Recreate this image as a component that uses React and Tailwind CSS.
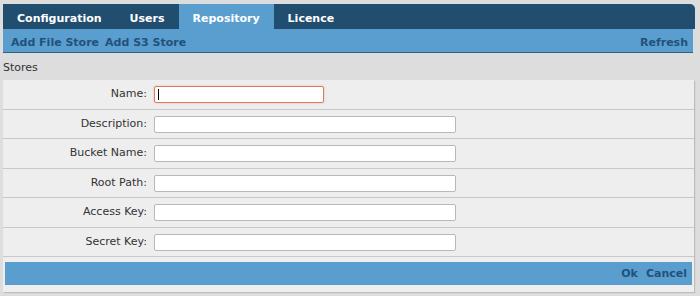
export default function App() {
  const fields = [
    ["Name", "h-[30px]"],
    ["Description", "h-[29px]"],
    ["Bucket Name", "h-[30px]"],
    ["Root Path", "h-[29px]"],
    ["Access Key", "h-[30px]"],
    ["Secret Key", "h-[29px]"],
  ];
  const tabs = ["Configuration", "Users", "Repository", "Licence"];
  return (
    <div className="w-[700px] h-[296px] bg-[#dddddd] pt-[4px] px-[3px] text-[11px] text-[#333333]" style={{ fontFamily: '"DejaVu Sans", sans-serif' }}>
      <div className="flex h-[25px] bg-[#214d6e] rounded-tr-[5px] w-[692px]">
        {tabs.map((t) => (
          <div
            key={t}
            className={
              "px-[14px] pt-[5px] flex items-center font-bold text-white " +
              (t === "Repository" ? "bg-[#5a9ecf]" : "")
            }
          >
            {t}
          </div>
        ))}
      </div>
      <div className="flex items-center justify-between h-[24px] pt-[5px] bg-[#5a9ecf] border-b border-[#2f5f82] w-[690px] pl-[8px] pr-[5px] font-bold text-[#21527a]">
        <div className="flex gap-[6px]">
          <span>Add File Store</span>
          <span>Add S3 Store</span>
        </div>
        <span>Refresh</span>
      </div>
      <div className="h-[27px] flex items-center pt-[3px]">Stores</div>
      <div className="w-[691px] bg-[#eeeeee] shadow-[1px_1px_1px_rgba(0,0,0,0.15)] pb-[7px]">
        {fields.map(([f, h], i) => (
          <div key={f} className={"flex items-center border-b border-[#c8c8c8] " + h}>
            <div className="w-[144px] text-right">{f}:</div>
            <div className="relative ml-[7px]">
              <input
                defaultValue=""
                className={
                  "block h-[17px] px-[3px] bg-white rounded-[2px] border outline-none text-[11px] " +
                  (i === 0
                    ? "w-[170px] border-[#e07a5a] shadow-[0_0_2px_rgba(224,122,90,0.5)]"
                    : "w-[302px] border-[#b8b8b8]")
                }
              />
              {i === 0 && (
                <div className="absolute left-[4px] top-[3px] w-[1px] h-[11px] bg-black" />
              )}
            </div>
          </div>
        ))}
        <div className="mt-[5px] mx-[2px] h-[23px] pt-[2px] bg-[#5a9ecf] flex items-center justify-end gap-[8px] px-[5px] font-bold text-[#21527a]">
          <span>Ok</span>
          <span>Cancel</span>
        </div>
      </div>
    </div>
  );
}
